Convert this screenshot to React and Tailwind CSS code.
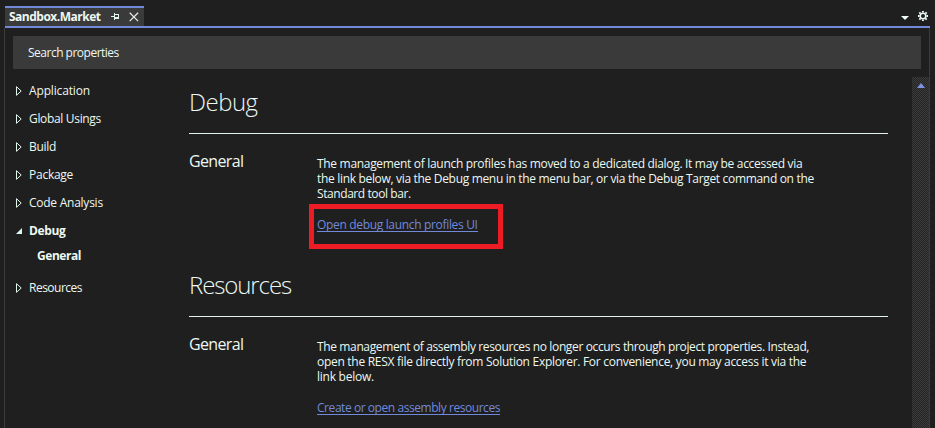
const nav = [
  { label: 'Application', cls: 'tracking-[-0.15px]' },
  { label: 'Global Usings', cls: 'tracking-[-0.33px]' },
  { label: 'Build', cls: 'tracking-[-0.3px]' },
  { label: 'Package', cls: 'tracking-[-0.25px]' },
  { label: 'Code Analysis', cls: 'tracking-[-0.25px]' },
];

function Collapsed() {
  return (
    <svg width="6" height="10" viewBox="0 0 6 10" className="mr-[7px] shrink-0">
      <path d="M.5 .7v8.6L5.2 5z" fill="none" stroke="#e2f5ec" />
    </svg>
  );
}

function NavItem({ label, cls }) {
  return (
    <div className="flex h-7 items-center">
      <Collapsed />
      <span className={cls}>{label}</span>
    </div>
  );
}

function Line({ cls, children }) {
  return <div className={`h-[15px] whitespace-nowrap ${cls}`}>{children}</div>;
}

function Section({ title, titleCls, children }) {
  return (
    <section className="h-[183px]">
      <div className="h-[53px] border-b border-[#e0f2ea]">
        <h1 className={`text-[24px] leading-[42px] font-[350] ${titleCls}`}>{title}</h1>
      </div>
      <div className="flex">
        <h2 className="w-32 shrink-0 pt-[14px] text-[16px] leading-[26px] tracking-[-0.65px]">General</h2>
        <div className="pt-[22px] leading-[15px]">{children}</div>
      </div>
    </section>
  );
}

export default function App() {
  return (
    <div className="flex h-[428px] w-[935px] flex-col overflow-hidden bg-[#1f1f1f] font-['Open_Sans','Noto_Sans',sans-serif] text-[12px] text-[#ecf8f2]">
      <header className="ml-[5px] flex h-7 w-[925px] shrink-0 items-end border-b-2 border-[#7289da]">
        <div className="flex h-5 w-[139px] items-center border-t-2 border-[#7289da] bg-[#3a3a3a] pl-1 font-bold">
          <span className="w-[102px] whitespace-nowrap tracking-[-0.5px]">Sandbox.Market</span>
          <svg width="9" height="8" viewBox="0 0 9 8" className="shrink-0" shapeRendering="crispEdges">
            <path d="M0 3h3v1H0zM3 0h1v7H3zM4 1h4v1H4zM4 4h4v2H4zM7 1h1v5H7z" fill="#e2f5ec" />
          </svg>
          <svg width="10" height="10" viewBox="0 0 10 10" className="ml-[9px] shrink-0">
            <path d="M.7 .7l8.4 8.4M9.1 .7L.7 9.1" stroke="#e2e8e8" strokeWidth="1.3" />
          </svg>
        </div>
        <div className="ml-auto flex h-5 items-center">
          <svg width="8" height="4" viewBox="0 0 8 4" className="mt-[3px] mr-[9px]">
            <path d="M0 0h8L4 4z" fill="#f0fbf4" />
          </svg>
          <svg width="10" height="10" viewBox="0 0 10 10" className="mr-[2px]">
            <circle cx="5" cy="5" r="2.8" fill="none" stroke="#e6f7ef" strokeWidth="1.6" />
            <path d="M5 0v1.6M5 8.4V10M0 5h1.6M8.4 5H10M1.3 1.3l1.3 1.3M7.4 7.4l1.3 1.3M8.7 1.3L7.4 2.6M2.6 7.4L1.3 8.7" stroke="#e6f7ef" strokeWidth="1.9" />
          </svg>
        </div>
      </header>
      <main className="ml-1 flex min-h-0 w-[926px] flex-1 flex-col border-x border-[#3c3c3c]">
        <div className="mt-2 ml-2 flex h-[33px] w-[908px] shrink-0 items-center bg-[#3a3a3a] pl-[15px]">
          <span className="tracking-[-0.5px]">Search properties</span>
        </div>
        <div className="flex min-h-0 flex-1 overflow-hidden pt-2">
          <nav className="w-[184px] shrink-0 pl-[11px]">
            {nav.map((n) => (
              <NavItem key={n.label} {...n} />
            ))}
            <div className="flex h-7 items-center font-bold">
              <svg width="6" height="6" viewBox="0 0 6 6" className="mr-[7px]">
                <path d="M6 0v6H0z" fill="#e2f5ec" />
              </svg>
              <span className="tracking-[-0.35px]">Debug</span>
            </div>
            <div className="flex h-[22px] items-center pl-[21px] font-bold">
              <span className="tracking-[-0.45px]">General</span>
            </div>
            <div className="pt-[7px]">
              <NavItem label="Resources" cls="tracking-[-0.5px]" />
            </div>
          </nav>
          <div className="w-[699px] shrink-0 pt-1">
            <Section title="Debug" titleCls="tracking-[-0.5px]">
              <Line cls="tracking-[-0.31px]">The management of launch profiles has moved to a dedicated dialog. It may be accessed via</Line>
              <Line cls="tracking-[-0.32px]">the link below, via the Debug menu in the menu bar, or via the Debug Target command on the</Line>
              <Line cls="tracking-[-0.42px]">Standard tool bar.</Line>
              <div className="mt-[3px] -ml-2 flex h-[45px] w-[194px] border-[5px] border-[#ed1c24] pt-[9px] pl-[3px]">
                <a className="h-[14px] border-b border-[#7289da] leading-[14px] tracking-[-0.33px] whitespace-nowrap text-[#7289da]">
                  Open debug launch profiles UI
                </a>
              </div>
            </Section>
            <Section title="Resources" titleCls="tracking-[-1.1px]">
              <Line cls="tracking-[-0.37px]">The management of assembly resources no longer occurs through project properties. Instead,</Line>
              <Line cls="tracking-[-0.29px]">open the RESX file directly from Solution Explorer. For convenience, you may access it via the</Line>
              <Line cls="tracking-[-0.25px]">link below.</Line>
              <div className="mt-[17px] flex">
                <a className="h-[14px] border-b border-[#7289da] leading-[14px] tracking-[-0.44px] whitespace-nowrap text-[#7289da]">
                  Create or open assembly resources
                </a>
              </div>
            </Section>
          </div>
          <div className="ml-auto flex h-[351px] w-[17px] justify-center bg-[#242424] bg-[repeating-conic-gradient(#3c3c3c_0_25%,#242424_0_50%)] bg-[length:2px_2px] pt-[6px]">
            <svg width="8" height="5" viewBox="0 0 8 5">
              <path d="M0 5L4 0l4 5z" fill="#7f93e6" />
            </svg>
          </div>
        </div>
      </main>
    </div>
  );
}
